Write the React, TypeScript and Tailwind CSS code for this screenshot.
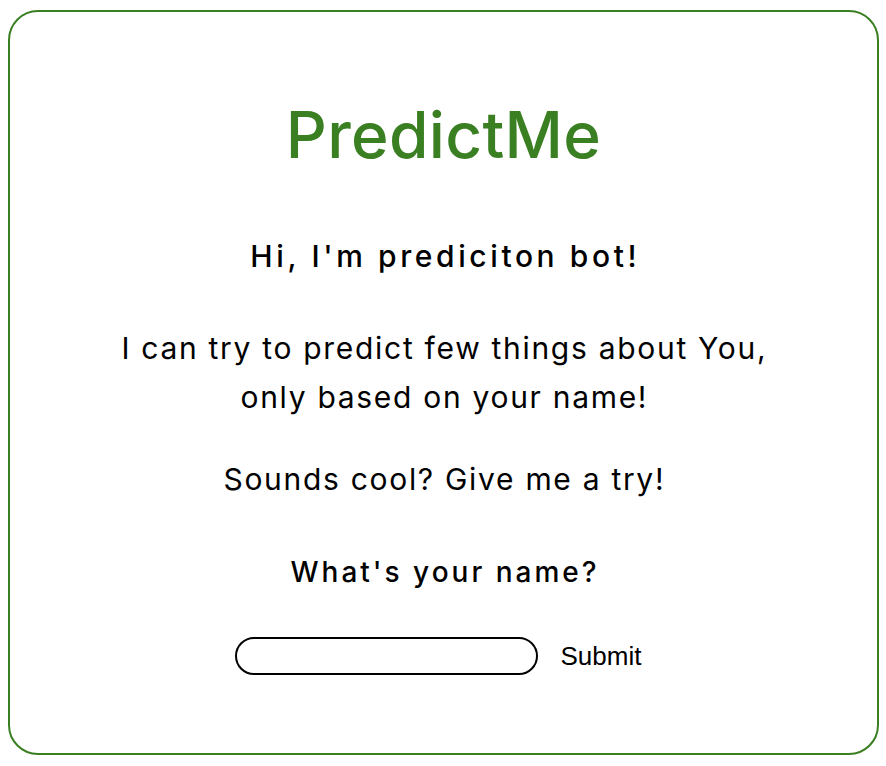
import React from "react";

const App = () => {
  return (
    <div className="min-h-[766px] bg-white px-2 pt-[10px] pb-[10px] font-['Inter',sans-serif]">
      <div className="flex h-[745px] w-[871px] flex-col items-center rounded-[30px] border-2 border-[#3a7f22] text-black">
        {/* Title */}
        <h1 className="mt-[91px] text-[64px] leading-[64px] font-medium tracking-[0.3px] text-[#3a7f22]">
          PredictMe
        </h1>

        <h2 className="mt-[69px] pl-[3.6px] text-[30px] leading-[40px] font-medium tracking-[3.6px]">
          Hi, I'm prediciton bot!
        </h2>

        <p className="mt-[48px] pl-[1.7px] text-center text-[30px] leading-[49px] tracking-[1.7px]">
          I can try to predict few things about You,
          <br />
          only based on your name!
        </p>

        <p className="mt-[33px] pl-[1.7px] text-[30px] leading-[49px] tracking-[1.7px]">
          Sounds cool? Give me a try!
        </p>

        <h3 className="mt-[48px] pl-[3px] text-[28px] leading-[40px] font-medium tracking-[3px]">
          What's your name?
        </h3>

        {/* Name form */}
        <form className="mt-[45px] flex items-center gap-[23px]">
          <input
            type="text"
            className="h-[38px] w-[303px] rounded-full border-2 border-black px-3 outline-none"
          />
          <button
            type="button"
            className="pr-[11px] font-['Liberation_Sans',sans-serif] text-[26px] leading-[38px]"
          >
            Submit
          </button>
        </form>
      </div>
    </div>
  );
};

export default App;
